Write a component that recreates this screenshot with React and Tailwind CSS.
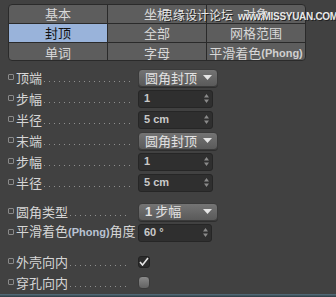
import React from 'react';

const CJK = { fontFamily: '"Noto Sans CJK SC", "Noto Sans", sans-serif' };
const LATIN = { fontFamily: '"Liberation Sans", Arial, sans-serif' };

const Label = ({ children, dots = true }) => (
    <div className="flex items-end w-[126px] h-full pb-[3px]">
        <span className="w-[6px] h-[6px] border border-[#8a8a8a] rounded-[1px] mr-[2px] mb-[5px] shrink-0" />
        <span className="text-[13px] leading-[15px] text-[#d6d6d6] whitespace-nowrap shrink-0" style={CJK}>{children}</span>
        {dots && (
            <span className="flex-1 ml-[2px] mr-[4px] mb-[3px] h-[1px] bg-[linear-gradient(to_right,#8e8e8e_1px,transparent_1px)] bg-[length:5px_1px] bg-repeat-x" />
        )}
    </div>
);

const Dropdown = ({ children }) => (
    <div className="ml-[4px] w-[80px] h-[18px] rounded-[4px] bg-gradient-to-b from-[#747474] to-[#5a5a5a] border border-[#3a3a3a] flex items-center justify-between pl-[6px] pr-[5px] shadow-[0_1px_0_#2e2e2e]">
        <span className="text-[13px] leading-[16px] text-[#e2e2e2] whitespace-nowrap" style={CJK}>{children}</span>
        <svg width="9" height="5" viewBox="0 0 9 5"><path d="M0 0 L9 0 L4.5 5 Z" fill="#e6e6e6" /></svg>
    </div>
);

const NumInput = ({ children, w = 75 }) => (
    <div className="ml-[4px] h-[18px] rounded-[3px] bg-[#2f2f2f] border border-[#262626] flex items-center justify-between pl-[5px] pr-[3px]" style={{ width: w }}>
        <span className="text-[11px] font-bold text-[#c9c9c9] leading-[13px]" style={LATIN}>{children}</span>
        <svg width="5" height="9" viewBox="0 0 5 9">
            <path d="M0 3.5 L2.5 0 L5 3.5 Z" fill="#8a8a8a" />
            <path d="M0 5.5 L2.5 9 L5 5.5 Z" fill="#8a8a8a" />
        </svg>
    </div>
);

const Row = ({ children }) => <div className="flex items-center h-[21px] pl-[8px]">{children}</div>;

const TabCell = ({ children, active, last }) => (
    <div className={`flex-1 flex items-center justify-center h-full text-[13px] ${active ? 'bg-[#99b3da] text-[#111]' : 'text-[#d8d8d8]'} ${last ? '' : 'border-r border-[#2a2a2a]'}`} style={CJK}>
        {children}
    </div>
);

export default function App() {
    return (
        <div className="w-[336px] h-[297px] bg-[#414141] relative overflow-hidden flex flex-col">
            <div className="mt-[4px] ml-[8px] w-[298px] h-[57px] rounded-[4px] border border-[#2a2a2a] bg-[#5d5d5d] overflow-hidden flex flex-col">
                <div className="flex h-[19px] border-b border-[#2a2a2a]">
                    <TabCell>基本</TabCell>
                    <TabCell>坐标</TabCell>
                    <TabCell last>对象</TabCell>
                </div>
                <div className="flex h-[19px] border-b border-[#2a2a2a]">
                    <TabCell active>封顶</TabCell>
                    <TabCell>全部</TabCell>
                    <TabCell last>网格范围</TabCell>
                </div>
                <div className="flex flex-1">
                    <TabCell>单词</TabCell>
                    <TabCell>字母</TabCell>
                    <TabCell last>
                        平滑着色<span className="text-[11px] font-bold text-[#d0d0d0]" style={LATIN}>(Phong)</span>
                    </TabCell>
                </div>
            </div>

            {/* 水印 */}
            <div className="absolute left-[161px] top-[6px] flex items-baseline whitespace-nowrap pointer-events-none">
                <span className="text-[12px] text-[#e8e8e8] [text-shadow:1px_1px_0_#222]" style={CJK}>思缘设计论坛</span>
                <span className="ml-[5px] text-[10px] font-bold tracking-[-0.3px] text-[#e8e8e8] [text-shadow:1px_1px_0_#222]" style={LATIN}>www.MISSYUAN.COM</span>
            </div>

            <div className="mt-[6px] flex flex-col">
                <Row><Label>顶端</Label><Dropdown>圆角封顶</Dropdown></Row>
                <Row><Label>步幅</Label><NumInput>1</NumInput></Row>
                <Row><Label>半径</Label><NumInput>5 cm</NumInput></Row>
                <Row><Label>末端</Label><Dropdown>圆角封顶</Dropdown></Row>
                <Row><Label>步幅</Label><NumInput>1</NumInput></Row>
                <Row><Label>半径</Label><NumInput>5 cm</NumInput></Row>
            </div>

            <div className="mt-[8px] flex flex-col">
                <Row><Label>圆角类型</Label><Dropdown><span style={LATIN} className="font-bold">1</span> 步幅</Dropdown></Row>
                <Row>
                    <Label dots={false}>
                        平滑着色<span className="text-[11px] font-bold text-[#b9c3d3]" style={LATIN}>(Phong)</span>角度
                    </Label>
                    <NumInput w={74}>60 °</NumInput>
                </Row>
            </div>

            <div className="mt-[8px] flex flex-col">
                <Row>
                    <Label>外壳向内</Label>
                    <div className="ml-[4px] w-[12px] h-[12px] rounded-[3px] bg-[#2c2c2c] border border-[#222] flex items-center justify-center">
                        <svg width="10" height="9" viewBox="0 0 10 9"><path d="M1 5 L3.5 8 L9 1" stroke="#e6e6e6" strokeWidth="1.6" fill="none" /></svg>
                    </div>
                </Row>
                <Row>
                    <Label>穿孔向内</Label>
                    <div className="ml-[4px] w-[12px] h-[13px] rounded-[4px] bg-gradient-to-b from-[#8a8a8a] to-[#626262] border border-[#3a3a3a]" />
                </Row>
            </div>

            <div className="absolute left-0 right-0 bottom-0 h-[3px] bg-gradient-to-b from-[#56707e] to-[#2d3b42]" />
        </div>
    );
}
